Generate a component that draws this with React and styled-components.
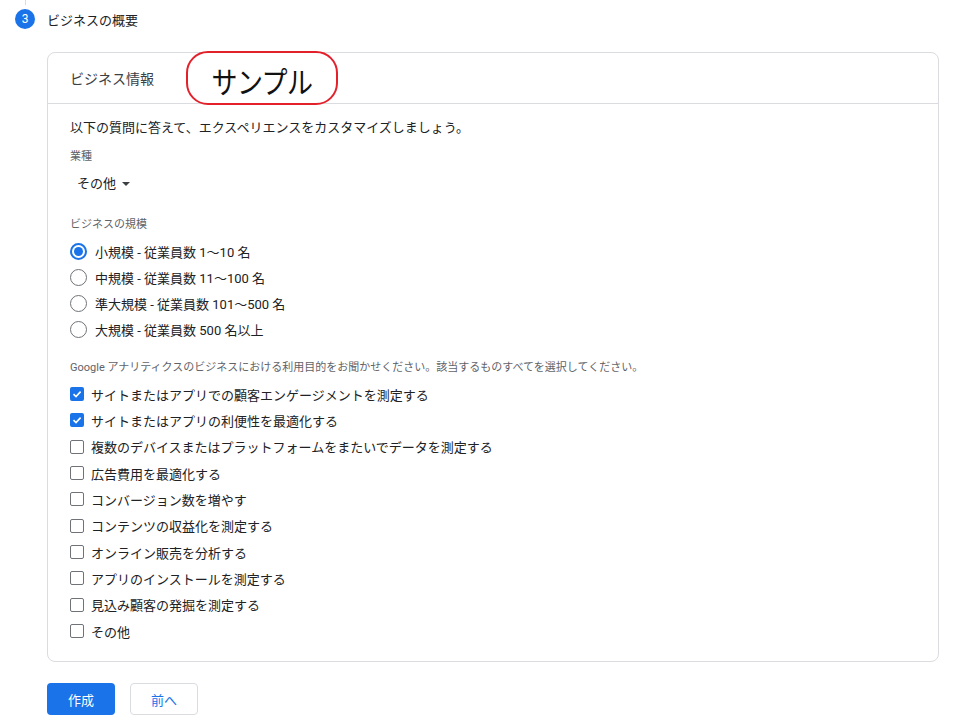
import React, { useState } from 'react';
import styled, { createGlobalStyle } from 'styled-components';

const GlobalStyle = createGlobalStyle`
  body {
    margin: 0;
    background: #fff;
    font-family: Roboto, "Noto Sans CJK JP", "Noto Sans", sans-serif;
    color: #202124;
  }
`;

const Page = styled.div`
  padding: 0 0 0 15px;
  width: 947px;
  box-sizing: border-box;
`;

const Connector = styled.div`
  width: 1px;
  height: 5px;
  margin-left: 10px;
  margin-bottom: 4px;
  background: #dadce0;
`;

const StepRow = styled.div`
  display: flex;
  align-items: center;
  gap: 12px;
  height: 20px;
`;

const StepBadge = styled.div`
  width: 20px;
  height: 20px;
  border-radius: 50%;
  background: #1a73e8;
  color: #fff;
  font-size: 12px;
  display: flex;
  align-items: center;
  justify-content: center;
`;

const StepTitle = styled.div`
  font-size: 13px;
  color: #202124;
`;

const Card = styled.div`
  position: relative;
  margin: 23px 0 0 32px;
  width: 892px;
  box-sizing: border-box;
  border: 1px solid #dadce0;
  border-radius: 8px;
`;

const CardHeader = styled.div`
  height: 50px;
  display: flex;
  align-items: center;
  padding-left: 22px;
  font-size: 14px;
  color: #3c4043;
  border-bottom: 1px solid #dadce0;
`;

// red "サンプル" stamp laid over the header
const SampleStamp = styled.div`
  position: absolute;
  left: 138px;
  top: -2px;
  width: 152px;
  height: 54px;
  box-sizing: border-box;
  border: 2px solid #e3212b;
  border-radius: 22px;
  background: #fff;
  display: flex;
  align-items: center;
  justify-content: center;
  padding-top: 2px;
  font-size: 26px;
  font-weight: 400;
  color: #111;
  letter-spacing: -0.5px;

  span {
    display: inline-block;
    transform: scaleY(1.15);
  }
`;

const CardBody = styled.div`
  padding: 14px 22px 17px;
`;

const Intro = styled.div`
  font-size: 13px;
  line-height: 20px;
`;

const FieldLabel = styled.div`
  font-size: 11px;
  line-height: 16px;
  color: #5f6368;
  margin-top: ${(p) => p.$top}px;
`;

const Select = styled.div`
  display: inline-flex;
  align-items: center;
  gap: 6px;
  margin-top: 9px;
  padding-left: 7px;
  font-size: 13px;
  line-height: 20px;
`;

const Caret = styled.span`
  width: 0;
  height: 0;
  border-left: 4px solid transparent;
  border-right: 4px solid transparent;
  border-top: 4px solid #3c4043;
  margin-top: -1px;
`;

const OptionList = styled.div`
  margin-top: ${(p) => p.$top}px;
  display: flex;
  flex-direction: column;
`;

const OptionRow = styled.label`
  display: flex;
  align-items: center;
  gap: ${(p) => p.$gap}px;
  height: ${(p) => p.$h}px;
  font-size: 13px;
  cursor: pointer;
`;

const Radio = styled.span`
  width: 17px;
  height: 17px;
  box-sizing: border-box;
  border-radius: 50%;
  border: ${(p) => (p.$on ? '2px solid #1a73e8' : '1.5px solid #6f7377')};
  display: flex;
  align-items: center;
  justify-content: center;

  &::after {
    content: '';
    width: 9px;
    height: 9px;
    border-radius: 50%;
    background: ${(p) => (p.$on ? '#1a73e8' : 'transparent')};
  }
`;

const Box = styled.span`
  width: 14px;
  height: 14px;
  box-sizing: border-box;
  border-radius: 2px;
  border: ${(p) => (p.$on ? 'none' : '1.5px solid #6f7377')};
  background: ${(p) => (p.$on ? '#1a73e8' : '#fff')};
  display: flex;
  align-items: center;
  justify-content: center;
`;

const Actions = styled.div`
  display: flex;
  gap: 15px;
  margin: 21px 0 0 32px;
`;

const Button = styled.button`
  width: 68px;
  height: 32px;
  box-sizing: border-box;
  border-radius: 4px;
  font-family: inherit;
  font-size: 13px;
  cursor: pointer;
  background: ${(p) => (p.$primary ? '#1a73e8' : '#fff')};
  color: ${(p) => (p.$primary ? '#fff' : '#1a73e8')};
  border: ${(p) => (p.$primary ? 'none' : '1px solid #dadce0')};
`;

const sizes = [
  '小規模 - 従業員数 1～10 名',
  '中規模 - 従業員数 11～100 名',
  '準大規模 - 従業員数 101～500 名',
  '大規模 - 従業員数 500 名以上',
];

const purposes = [
  'サイトまたはアプリでの顧客エンゲージメントを測定する',
  'サイトまたはアプリの利便性を最適化する',
  '複数のデバイスまたはプラットフォームをまたいでデータを測定する',
  '広告費用を最適化する',
  'コンバージョン数を増やす',
  'コンテンツの収益化を測定する',
  'オンライン販売を分析する',
  'アプリのインストールを測定する',
  '見込み顧客の発掘を測定する',
  'その他',
];

const Check = () => (
  <svg width="10" height="10" viewBox="0 0 10 10">
    <path d="M1.5 5.2 L4 7.6 L8.6 2.6" fill="none" stroke="#fff" strokeWidth="1.6" />
  </svg>
);

const App = () => {
  const [size, setSize] = useState(0);
  const [checked, setChecked] = useState([0, 1]);

  const toggle = (i) =>
    setChecked((c) => (c.includes(i) ? c.filter((x) => x !== i) : [...c, i]));

  return (
    <Page>
      <GlobalStyle />
      <Connector />
      <StepRow>
        <StepBadge>3</StepBadge>
        <StepTitle>ビジネスの概要</StepTitle>
      </StepRow>

      <Card>
        <CardHeader>ビジネス情報</CardHeader>
        <SampleStamp>
          <span>サンプル</span>
        </SampleStamp>
        <CardBody>
          <Intro>以下の質問に答えて、エクスペリエンスをカスタマイズしましょう。</Intro>

          <FieldLabel $top={11}>業種</FieldLabel>
          <Select>
            その他
            <Caret />
          </Select>

          <FieldLabel $top={23}>ビジネスの規模</FieldLabel>
          <OptionList $top={5}>
            {sizes.map((s, i) => (
              <OptionRow key={s} $gap={8} $h={26} onClick={() => setSize(i)}>
                <Radio $on={size === i} />
                {s}
              </OptionRow>
            ))}
          </OptionList>

          <FieldLabel $top={18}>
            Google アナリティクスのビジネスにおける利用目的をお聞かせください。該当するものすべてを選択してください。
          </FieldLabel>
          <OptionList $top={5}>
            {purposes.map((p, i) => (
              <OptionRow key={p} $gap={7} $h={26.33} onClick={() => toggle(i)}>
                <Box $on={checked.includes(i)}>{checked.includes(i) && <Check />}</Box>
                {p}
              </OptionRow>
            ))}
          </OptionList>
        </CardBody>
      </Card>

      <Actions>
        <Button $primary>作成</Button>
        <Button>前へ</Button>
      </Actions>
    </Page>
  );
};

export default App;
